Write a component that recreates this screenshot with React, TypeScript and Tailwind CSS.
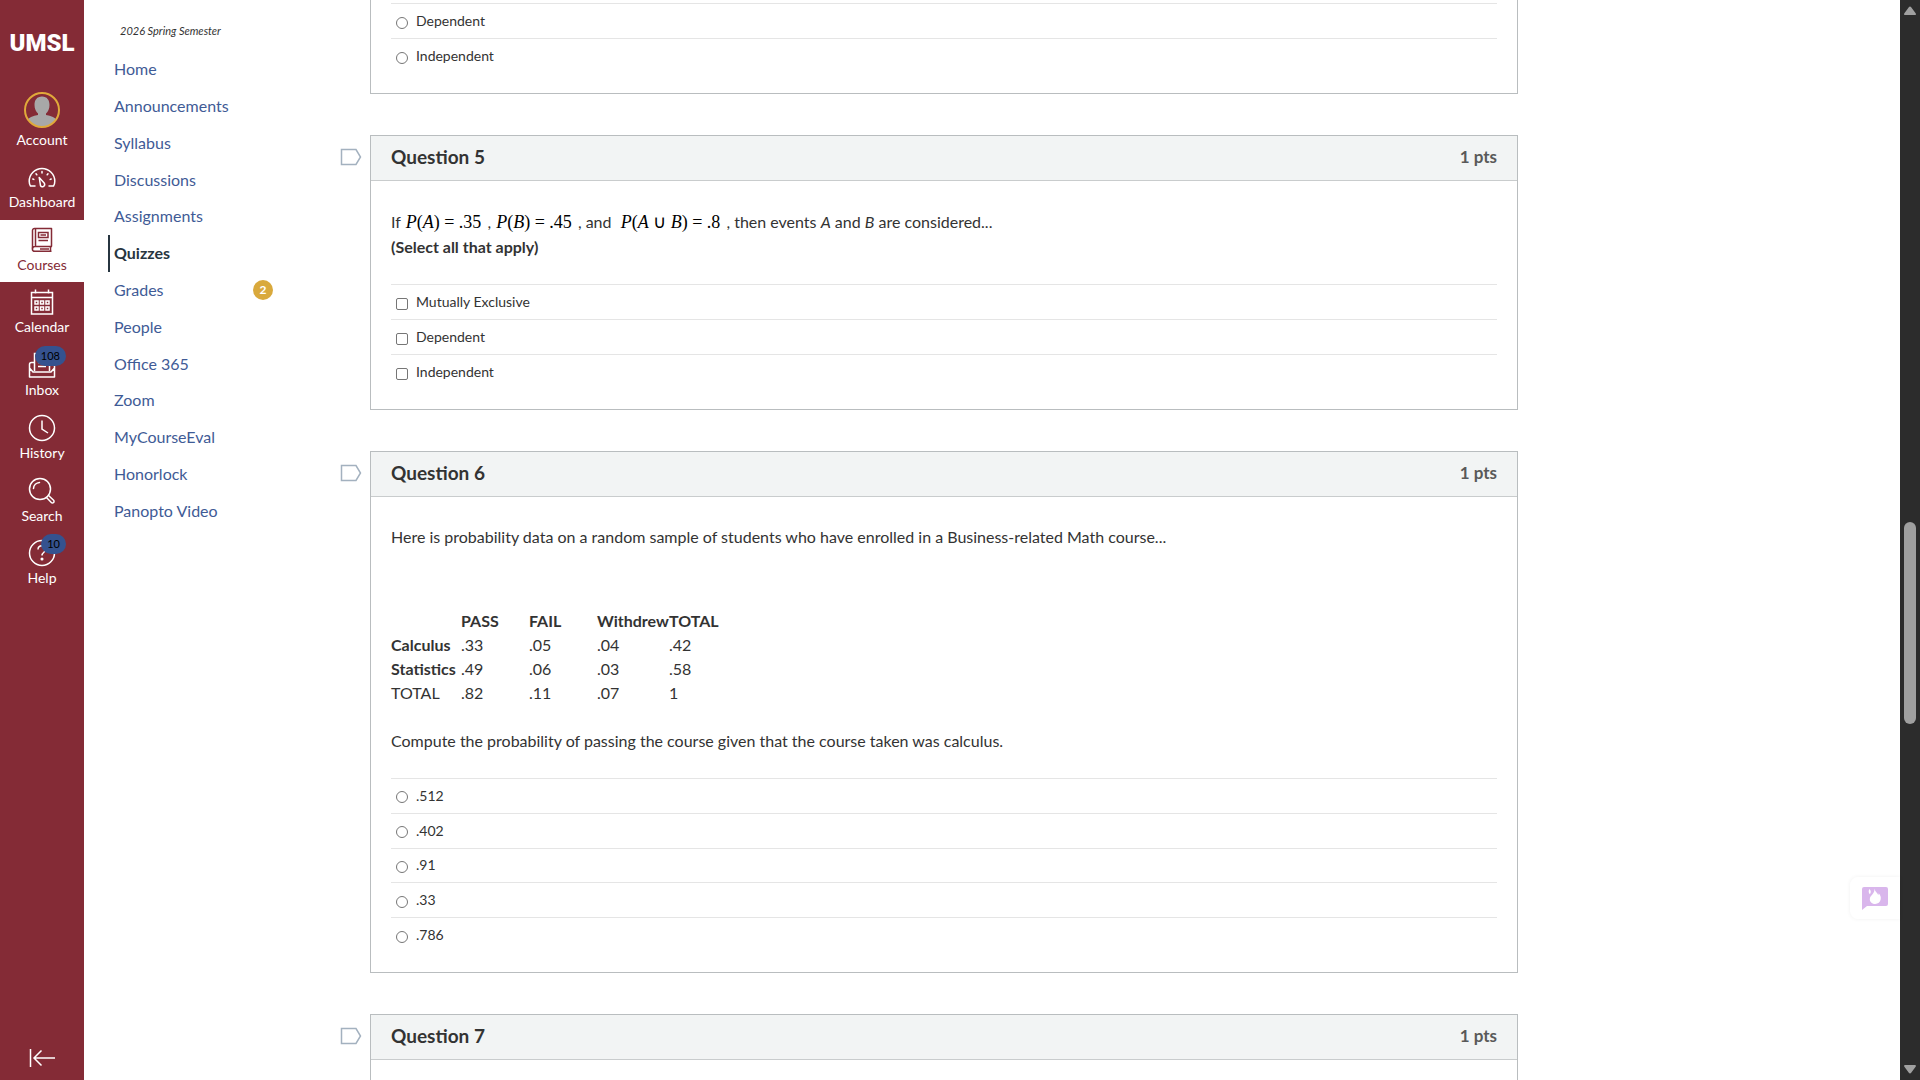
import { useState, type ReactNode } from "react";
import clsx from "clsx";

type Answer = { id: string; label: string };

const courseLinks = [
  "Home",
  "Announcements",
  "Syllabus",
  "Discussions",
  "Assignments",
  "Quizzes",
  "Grades",
  "People",
  "Office 365",
  "Zoom",
  "MyCourseEval",
  "Honorlock",
  "Panopto Video",
];

function Icon({ children }: { children: ReactNode }) {
  return (
    <svg
      width="28"
      height="28"
      viewBox="0 0 28 28"
      fill="none"
      stroke="currentColor"
      strokeWidth="1.5"
      aria-hidden="true"
    >
      {children}
    </svg>
  );
}

function DashboardIcon() {
  return (
    <Icon>
      <path
        d="M7 23H2.500Q1.200 21 1.200 18.300A12.800 12.800 0 0 1 26.800 18.300Q26.800 21 25.500 23H21"
        strokeLinejoin="round"
        strokeLinecap="round"
      />
      <path
        d="M14 8.500v1.500M8 10.800l.8 1M20 10.800l-.8 1M4.800 16l1 .4M23.200 16l-1 .4"
        strokeLinecap="round"
      />
      <path d="M11.200 14.500l5.200 5.800a2.300 2.300 0 0 1-3.900 2.400z" strokeLinejoin="round" />
    </Icon>
  );
}

function CoursesIcon() {
  return (
    <Icon>
      <path d="M23.500 20.500V2.500H6.500a2 2 0 0 0-2 2V22.500" strokeLinejoin="round" />
      <path d="M24 20.500H6.800a2.200 2.200 0 0 0 0 4.800H23.500M22.500 20.500v4.500M7.500 3v17" />
      <path d="M10.500 6.500h9.500v5h-9.500zM10.500 14.500h9.500M12.500 9h5.500M12 22.900h9" />
    </Icon>
  );
}

function CalendarIcon() {
  return (
    <Icon>
      <path d="M3.500 4.500h21v21.500h-21zM3.500 9.500h21M7.500 1.500v4M20.500 1.500v4" />
      <path d="M7 13h3v3h-3zM12.500 13h3v3h-3zM18 13h3v3h-3zM7 19h3v3h-3zM12.500 19h3v3h-3zM18 19h3v3h-3z" />
    </Icon>
  );
}

function InboxIcon() {
  return (
    <Icon>
      <path d="M6.500 20V2.500h15V20M10 11.500h8M10 15.500h8" />
      <path
        d="M6 11.500H3.500q-2 0-2 2V26h25V13.500q0-2-2-2H22M1.500 17l3.500 4h18l3.500-4"
        strokeLinejoin="round"
      />
    </Icon>
  );
}

function HistoryIcon() {
  return (
    <Icon>
      <circle cx="14" cy="14" r="12.500" />
      <path d="M14 6.500v8.500l6 4" />
    </Icon>
  );
}

function SearchIcon() {
  return (
    <Icon>
      <circle cx="12" cy="12" r="10.500" />
      <path
        d="M5.500 11.500a6.500 6.500 0 0 1 6-6M18.500 20.500l4.800 5a1.500 1.500 0 0 0 2.300-2.200l-5-4.800"
        strokeLinecap="round"
      />
    </Icon>
  );
}

function HelpIcon() {
  return (
    <Icon>
      <circle cx="14" cy="14" r="12.500" />
      <path d="M10 10.500c0-5 8-5 8-.5 0 3-4 3-4 6.500" />
      <circle cx="14" cy="20" r="0.800" fill="currentColor" />
    </Icon>
  );
}

function Avatar() {
  return (
    <svg width="36" height="36" viewBox="0 0 36 36" aria-hidden="true">
      <clipPath id="avatar-clip">
        <circle cx="18" cy="18" r="17" />
      </clipPath>
      <g clipPath="url(#avatar-clip)" fill="#a8a8a8">
        <path d="M18 4.500c5 0 7.500 3.500 7.500 8.500 0 4-1.500 6.500-3.500 8.500v1.500c5 1 9.500 2.500 12 6V36H2v-7c2.500-3.500 7-5 12-6v-1.500c-2-2-3.500-4.500-3.500-8.500 0-5 2.500-8.500 7.500-8.500z" />
      </g>
      <circle cx="18" cy="18" r="17" fill="none" stroke="#e0a93a" strokeWidth="2" />
    </svg>
  );
}

const globalLinks = [
  { label: "Dashboard", icon: <DashboardIcon /> },
  { label: "Courses", icon: <CoursesIcon />, active: true },
  { label: "Calendar", icon: <CalendarIcon /> },
  { label: "Inbox", icon: <InboxIcon />, badge: "108" },
  { label: "History", icon: <HistoryIcon /> },
  { label: "Search", icon: <SearchIcon /> },
  { label: "Help", icon: <HelpIcon />, badge: "10" },
];

function GlobalNav() {
  return (
    <nav
      aria-label="Global"
      className="flex w-[84px] shrink-0 flex-col bg-[#842b36] text-sm text-white"
    >
      <a
        href="#umsl"
        className="flex h-[86px] items-center justify-center font-[Roboto,sans-serif] text-2xl font-black"
      >
        UMSL
      </a>
      <a
        href="#account"
        className="flex h-[71px] flex-col items-center gap-0.5 pt-1.5 leading-5"
      >
        <Avatar />
        Account
      </a>
      <div className="grid h-[439px] auto-rows-fr">
        {globalLinks.map((link) => (
          <a
            key={link.label}
            href={`#${link.label.toLowerCase()}`}
            className={clsx(
              "relative flex flex-col items-center gap-px pt-1.5 leading-5",
              link.active && "bg-white text-[#842b36]",
            )}
          >
            {link.icon}
            {link.label}
            {link.badge && (
              <span className="absolute top-px right-[18px] rounded-full bg-[#35528f] px-1.5 text-[11px] leading-5 text-black">
                {link.badge}
              </span>
            )}
          </a>
        ))}
      </div>
      <button
        type="button"
        aria-label="Minimize global navigation"
        className="mt-auto flex h-11 items-center justify-center"
      >
        <svg
          width="28"
          height="20"
          viewBox="0 0 28 20"
          fill="none"
          stroke="currentColor"
          strokeWidth="1.500"
        >
          <path d="M2.500 1v18M27 10H6M13.500 2.500L6 10l7.500 7.500" />
        </svg>
      </button>
    </nav>
  );
}

function CourseNav() {
  return (
    <nav aria-label="Course" className="w-[194px] shrink-0 pr-[5px] pl-6">
      <p className="pt-[21px] pl-3 text-[11px] leading-5 text-[#333333] italic">
        2026 Spring Semester
      </p>
      <ul className="mt-[10px] grid h-[478px] auto-rows-fr">
        {courseLinks.map((name) => (
          <li key={name} className="flex">
            <a
              href={`#${name.toLowerCase().replace(" ", "-")}`}
              className={clsx(
                "flex flex-1 items-center justify-between border-l-2 pl-1",
                name === "Quizzes"
                  ? "border-[#273540] font-bold text-[#273540]"
                  : "border-transparent text-[#3f5b96]",
              )}
            >
              {name}
              {name === "Grades" && (
                <span className="size-5 rounded-full bg-[#d9a93c] text-center text-xs leading-5 font-bold text-white">
                  2
                </span>
              )}
            </a>
          </li>
        ))}
      </ul>
    </nav>
  );
}

function AnswerList({
  name,
  type,
  answers,
  className,
}: {
  name: string;
  type: "radio" | "checkbox";
  answers: Answer[];
  className: string;
}) {
  return (
    <div className={clsx("grid auto-rows-fr text-sm", className)}>
      {answers.map((answer) => (
        <label
          key={answer.id}
          htmlFor={answer.id}
          className="flex items-center gap-2 border-t border-[#e5e5e5] pl-[5px]"
        >
          <input
            id={answer.id}
            type={type}
            name={name}
            className={clsx(
              "mt-[3px] size-3 appearance-none border border-[#767676] bg-white checked:bg-[#38548f]",
              type === "radio" ? "rounded-full" : "rounded-[2px]",
            )}
          />
          {answer.label}
        </label>
      ))}
    </div>
  );
}

function Question({ number, children }: { number: number; children?: ReactNode }) {
  const [flagged, setFlagged] = useState(false);

  return (
    <section className="relative border border-[#b9bdbf]">
      <button
        type="button"
        aria-label={`Flag question ${number}`}
        aria-pressed={flagged}
        onClick={() => setFlagged(!flagged)}
        className="absolute top-3 right-full mr-[9px]"
      >
        <svg
          width="22"
          height="18"
          viewBox="0 0 22 18"
          fill={flagged ? "#f5d76e" : "#ffffff"}
          stroke="#a3b1bf"
          strokeWidth="1.500"
        >
          <path d="M1.500 1.500H16L20.500 9 16 16.500H1.500z" />
        </svg>
      </button>
      <header className="flex h-[45px] items-center justify-between border-b border-[#c9cccd] bg-[#f2f4f4] px-5 pb-0.5 font-bold">
        <h2 className="text-[19px] leading-6">Question {number}</h2>
        <span className="text-[17px] leading-6 text-[#595959]">1 pts</span>
      </header>
      <div className="px-5">{children}</div>
    </section>
  );
}

function Equation({ children }: { children: ReactNode }) {
  return (
    <span className="mr-0.5 ml-px font-['Liberation_Serif',serif] text-lg leading-none text-black">
      {children}
    </span>
  );
}

function ProbabilityTable() {
  return (
    <table className="mt-[60px] text-left">
      <thead>
        <tr>
          <td className="w-[70px] p-0" />
          <th className="w-[68px] p-0">PASS</th>
          <th className="w-[68px] p-0">FAIL</th>
          <th className="w-[72px] p-0">Withdrew</th>
          <th className="p-0">TOTAL</th>
        </tr>
      </thead>
      <tbody>
        <tr>
          <th className="p-0">Calculus</th>
          <td>.33</td>
          <td>.05</td>
          <td>.04</td>
          <td>.42</td>
        </tr>
        <tr>
          <th className="p-0">Statistics</th>
          <td>.49</td>
          <td>.06</td>
          <td>.03</td>
          <td>.58</td>
        </tr>
        <tr>
          <td>TOTAL</td>
          <td>.82</td>
          <td>.11</td>
          <td>.07</td>
          <td>1</td>
        </tr>
      </tbody>
    </table>
  );
}

function Quiz() {
  return (
    <main className="flex min-w-0 flex-1 flex-col gap-[41px] pr-[382px] pl-[92px]">
      <section className="border border-t-0 border-[#b9bdbf] px-5 pt-[3px] pb-5">
        <AnswerList
          name="question-4"
          type="radio"
          className="h-[70px]"
          answers={[
            { id: "q4-dependent", label: "Dependent" },
            { id: "q4-independent", label: "Independent" },
          ]}
        />
      </section>

      <Question number={5}>
        <p className="pt-[29px]">
          If{" "}
          <Equation>
            <i>P</i>(<i>A</i>) = .35
          </Equation>
          {" , "}
          <Equation>
            <i>P</i>(<i>B</i>) = .45
          </Equation>
          {" , and \u00a0"}
          <Equation>
            <i>P</i>(<i>A</i> ∪ <i>B</i>) = .8
          </Equation>
          {" , then events "}
          <em>A</em> and <em>B</em> are considered...
        </p>
        <p className="mt-px font-bold">(Select all that apply)</p>
        <AnswerList
          name="question-5"
          type="checkbox"
          className="mt-[25px] mb-5 h-[105px]"
          answers={[
            { id: "q5-exclusive", label: "Mutually Exclusive" },
            { id: "q5-dependent", label: "Dependent" },
            { id: "q5-independent", label: "Independent" },
          ]}
        />
      </Question>

      <Question number={6}>
        <p className="pt-[28px]">
          Here is probability data on a random sample of students who have
          enrolled in a Business-related Math course...
        </p>
        <ProbabilityTable />
        <p className="mt-6">
          Compute the probability of passing the course given that the course
          taken was calculus.
        </p>
        <AnswerList
          name="question-6"
          type="radio"
          className="mt-[25px] mb-5 h-[174px]"
          answers={[
            { id: "q6-512", label: ".512" },
            { id: "q6-402", label: ".402" },
            { id: "q6-91", label: ".91" },
            { id: "q6-33", label: ".33" },
            { id: "q6-786", label: ".786" },
          ]}
        />
      </Question>

      <Question number={7}>
        <div className="h-40" />
      </Question>
    </main>
  );
}

function ChatWidget() {
  return (
    <button
      type="button"
      aria-label="Open chat"
      className="absolute right-5 bottom-[161px] flex h-[42px] w-[50px] items-center rounded-l-lg bg-white pl-3 shadow-[0_0_4px_rgba(0,0,0,0.06)]"
    >
      <svg width="26" height="23" viewBox="0 0 26 23">
        <path
          d="M2 0h22a2 2 0 0 1 2 2v15a2 2 0 0 1-2 2H5l-5 4V2a2 2 0 0 1 2-2z"
          fill="#d9b6ec"
        />
        <path
          d="M12.500 1.500c.3 3 2.700 4 3.700 6.500.4-.5.5-1 .5-1.700 1.800 2 2.400 3.700 2 6-.5 2.800-2.700 4.700-5.500 4.700s-5.400-2-5.400-4.800c0-2.200 1.200-3.400 2.700-5 1.300-1.400 2.100-3.200 2-5.700zM7.500 2c-1.200 1.800-1 3.600.3 5.200C9.300 5.500 9 3.700 7.500 2z"
          fill="#fff"
        />
      </svg>
    </button>
  );
}

function Scrollbar() {
  return (
    <div
      aria-hidden="true"
      className="flex w-5 shrink-0 flex-col items-center bg-[#2c2c2c] py-[6px] text-[#a0a0a0]"
    >
      <svg width="12" height="9" viewBox="0 0 12 9" fill="currentColor">
        <path d="M6 0.500q.7 0 1.200.8L11.800 7.500q.4 1.500-.8 1.500H1q-1.200 0-.8-1.500L4.800 1.300Q5.300.5 6 .5z" />
      </svg>
      <div className="flex w-3 flex-1 flex-col">
        <div className="flex-[507]" />
        <div className="flex-[202] rounded-full bg-[#a0a0a0]" />
        <div className="flex-[341]" />
      </div>
      <svg width="12" height="9" viewBox="0 0 12 9" fill="currentColor">
        <path d="M6 8.500q.7 0 1.200-.8L11.800 1.500Q12.200 0 11 0H1Q-.2 0 .2 1.500L4.800 7.700q.5.800 1.200.8z" />
      </svg>
    </div>
  );
}

export default function App() {
  return (
    <div className="relative flex h-screen overflow-hidden bg-white font-[Lato,sans-serif] text-base text-[#333333]">
      <GlobalNav />
      <CourseNav />
      <Quiz />
      <ChatWidget />
      <Scrollbar />
    </div>
  );
}
